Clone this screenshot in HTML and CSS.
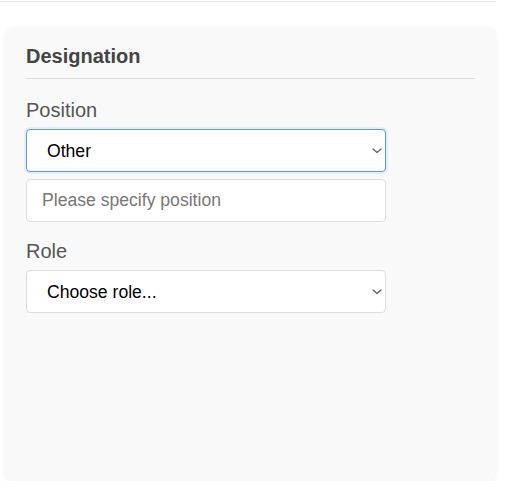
FILE: index.html
```html
<!DOCTYPE html>
<html>
<head>
<meta charset="utf-8">
<link rel="stylesheet" href="styles.css">
</head>
<body>
<div class="topline"></div>
<section class="card">
  <h3 class="card-title">Designation</h3>
  <div class="group">
    <label class="label" for="position">Position</label>
    <div class="select-wrap">
      <select id="position" class="control select focused">
        <option>Other</option>
      </select>
      <svg class="chevron" width="10" height="6" viewBox="0 0 10 6"><path d="M1 1 L5 4.5 L9 1" fill="none" stroke="#666" stroke-width="1.3" stroke-linecap="round" stroke-linejoin="round"/></svg>
    </div>
    <input class="control input extra" type="text" placeholder="Please specify position">
  </div>
  <div class="group">
    <label class="label" for="role">Role</label>
    <div class="select-wrap">
      <select id="role" class="control select">
        <option>Choose role...</option>
      </select>
      <svg class="chevron" width="10" height="6" viewBox="0 0 10 6"><path d="M1 1 L5 4.5 L9 1" fill="none" stroke="#666" stroke-width="1.3" stroke-linecap="round" stroke-linejoin="round"/></svg>
    </div>
  </div>
</section>
</body>
</html>
```
FILE: styles.css
```css
html, body {
  margin: 0;
  padding: 0;
  background: #ffffff;
  font-family: "Liberation Sans", Arial, sans-serif;
}

.topline {
  width: 495px;
  height: 1px;
  border-bottom: 1px solid #e8e8e8;
}

.card {
  box-sizing: border-box;
  width: 489px;
  height: 454px;
  margin: 25px 0 0 6px;
  padding: 18px 20px 20px 20px;
  background: #f9f9f9;
  border-radius: 8px;
  box-shadow: 0 2px 6px rgba(0, 0, 0, 0.07);
}

.card-title {
  margin: 0;
  padding-bottom: 10px;
  border-bottom: 1px solid #dddddd;
  font-size: 20px;
  line-height: 23px;
  font-weight: bold;
  color: #444444;
}

.group {
  margin-top: 18px;
  display: flex;
  flex-direction: column;
  align-items: flex-start;
}

.group:first-of-type {
  margin-top: 20px;
}

.label {
  font-size: 20px;
  line-height: 23px;
  color: #555555;
  margin-bottom: 7px;
}

.select-wrap {
  position: relative;
  width: 360px;
  height: 43px;
}

.chevron {
  position: absolute;
  right: 4px;
  top: 19px;
  pointer-events: none;
}

.control {
  box-sizing: border-box;
  width: 360px;
  height: 43px;
  border: 1px solid #dddddd;
  border-radius: 4px;
  background: #ffffff;
  font-family: "Liberation Sans", Arial, sans-serif;
  font-size: 17.6px;
  color: #000000;
  margin: 0;
}

.select {
  display: block;
  -webkit-appearance: none;
  appearance: none;
  padding: 0 24px 0 20px;
}

.input {
  padding: 0 15px;
}

.input::placeholder {
  color: #777777;
}

.extra {
  margin-top: 7px;
}

.focused {
  border-color: #5a9be6;
  box-shadow: 0 0 0 2px rgba(90, 155, 230, 0.12);
  outline: none;
}
```
